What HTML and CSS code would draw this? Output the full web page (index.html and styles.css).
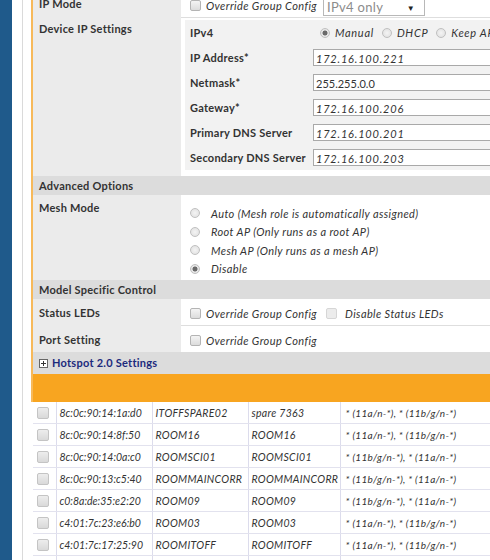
FILE: index.html
```html
<!DOCTYPE html>
<html>
<head>
<meta charset="utf-8">
<link rel="stylesheet" href="styles.css">
</head>
<body>
<div class="page">
  <div class="sidebar"></div>
  <div class="gutter"></div>
  <div class="main">
    <div class="panel">
      <div class="row ipmode">
        <div class="label">IP Mode</div>
        <div class="value inline sep">
          <span class="cb"></span><span class="it">Override Group Config</span>
          <span class="select">IPv4 only<span class="arrow">▼</span></span>
        </div>
      </div>
      <div class="row device">
        <div class="label">Device IP Settings</div>
        <div class="value wrap">
          <div class="nested">
            <div class="nrow"><div class="nlabel">IPv4</div><div class="ncell radios"><span class="rd on"></span><span class="it">Manual</span><span class="rd"></span><span class="it">DHCP</span><span class="rd"></span><span class="it">Keep AP's Setting</span></div></div>
            <div class="nrow"><div class="nlabel">IP Address*</div><div class="ncell"><span class="inp it">172.16.100.221</span></div></div>
            <div class="nrow"><div class="nlabel">Netmask*</div><div class="ncell"><span class="inp">255.255.0.0</span></div></div>
            <div class="nrow"><div class="nlabel">Gateway*</div><div class="ncell"><span class="inp it">172.16.100.206</span></div></div>
            <div class="nrow"><div class="nlabel">Primary DNS Server</div><div class="ncell"><span class="inp it">172.16.100.201</span></div></div>
            <div class="nrow"><div class="nlabel">Secondary DNS Server</div><div class="ncell"><span class="inp it">172.16.100.203</span></div></div>
          </div>
        </div>
      </div>
      <div class="section">Advanced Options</div>
      <div class="row mesh">
        <div class="label">Mesh Mode</div>
        <div class="value list">
          <div class="opt"><span class="rd"></span><span class="it">Auto (Mesh role is automatically assigned)</span></div>
          <div class="opt"><span class="rd"></span><span class="it">Root AP (Only runs as a root AP)</span></div>
          <div class="opt"><span class="rd"></span><span class="it">Mesh AP (Only runs as a mesh AP)</span></div>
          <div class="opt"><span class="rd on"></span><span class="it">Disable</span></div>
        </div>
      </div>
      <div class="section">Model Specific Control</div>
      <div class="row leds">
        <div class="label">Status LEDs</div>
        <div class="value inline sep">
          <span class="cb"></span><span class="it">Override Group Config</span>
          <span class="cb dis"></span><span class="it">Disable Status LEDs</span>
        </div>
      </div>
      <div class="row port">
        <div class="label">Port Setting</div>
        <div class="value inline">
          <span class="cb"></span><span class="it">Override Group Config</span>
        </div>
      </div>
      <div class="section hotspot"><span class="plus"></span>Hotspot 2.0 Settings</div>
      <div class="band"></div>
    </div>
    <table class="aps">
      <colgroup><col class="c1"><col class="c2"><col class="c3"><col class="c4"><col class="c5"></colgroup>
      <tr><td><span class="cb g"></span></td><td>8c:0c:90:14:1a:d0</td><td>ITOFFSPARE02</td><td>spare 7363</td><td>* (11a/n-*), * (11b/g/n-*)</td></tr>
      <tr><td><span class="cb g"></span></td><td>8c:0c:90:14:8f:50</td><td>ROOM16</td><td>ROOM16</td><td>* (11a/n-*), * (11b/g/n-*)</td></tr>
      <tr><td><span class="cb g"></span></td><td>8c:0c:90:14:0a:c0</td><td>ROOMSCI01</td><td>ROOMSCI01</td><td>* (11b/g/n-*), * (11a/n-*)</td></tr>
      <tr><td><span class="cb g"></span></td><td>8c:0c:90:13:c5:40</td><td>ROOMMAINCORR</td><td>ROOMMAINCORR</td><td>* (11b/g/n-*), * (11a/n-*)</td></tr>
      <tr><td><span class="cb g"></span></td><td>c0:8a:de:35:e2:20</td><td>ROOM09</td><td>ROOM09</td><td>* (11b/g/n-*), * (11a/n-*)</td></tr>
      <tr><td><span class="cb g"></span></td><td>c4:01:7c:23:e6:b0</td><td>ROOM03</td><td>ROOM03</td><td>* (11a/n-*), * (11b/g/n-*)</td></tr>
      <tr><td><span class="cb g"></span></td><td>c4:01:7c:17:25:90</td><td>ROOMITOFF</td><td>ROOMITOFF</td><td>* (11a/n-*), * (11b/g/n-*)</td></tr>
      <tr><td><span class="cb g"></span></td><td>c4:01:7c:17:25:a0</td><td>ROOM12</td><td>ROOM12</td><td>* (11a/n-*), * (11b/g/n-*)</td></tr>
    </table>
  </div>
</div>
</body>
</html>
```
FILE: styles.css
```css
html, body { margin: 0; padding: 0; background: #fff; }
body { font-family: Lato, "Liberation Sans", sans-serif; font-size: 11px; color: #333; }
.page { display: flex; width: 490px; height: 560px; overflow: hidden; }
.sidebar { width: 12px; flex: none; background: #1f5a8b; }
.gutter { width: 10px; flex: none; background: #fff; }
.main { flex: none; width: 520px; border-left: 1px solid #dadada; padding-left: 8px; }
.panel { border-left: 2px solid #f7b95a; background: #ebebeb; margin-top: -6px; }
.row { display: flex; }
.label { width: 142px; flex: none; padding: 0 0 0 6px; font-weight: bold; letter-spacing: 0.25px; }
.value { flex: 1; background: #fff; }
.value.sep { border-bottom: 1px solid #dedede; }
.inline { display: flex; align-items: center; padding-left: 9px; }
.it { font-style: italic; letter-spacing: 0.4px; }
.cb { display: inline-block; width: 9px; height: 9px; border: 1px solid #b4b4b4; border-radius: 2px; background: linear-gradient(#f4f4f4, #dcdcdc); margin-right: 5px; flex: none; }
.cb.dis { border-color: #d6d6d6; background: #ececec; margin-left: 9px; margin-right: 8px; }
.rd { display: inline-block; width: 10px; height: 10px; border: 1px solid #c0c0c0; border-radius: 50%; background: radial-gradient(#f4f4f4, #dedede); flex: none; box-sizing: border-box; }
.rd.on { background: radial-gradient(circle, #6a6a6a 0 2.2px, #e6e6e6 2.8px); }
.ipmode { height: 24px; }
.ipmode .label { padding-top: 3px; }
.select { display: inline-flex; align-items: center; margin-left: 6px; width: 102px; height: 18px; margin-top: 2px; border: 1px solid #b8b8b8; box-sizing: border-box; padding-left: 3px; font-size: 13px; letter-spacing: 0.3px; color: #8c8c8c; background: #fff; position: relative; }
.arrow { position: absolute; right: 9px; top: 4px; font-size: 8px; color: #222; }
.device .label { padding-top: 4px; }
.wrap { padding: 2px 0 6px 4px; }
.nested { background: #f2f2f2; }
.nrow { display: flex; height: 25px; align-items: center; }
.nlabel { width: 120px; padding-left: 5px; flex: none; font-weight: bold; letter-spacing: 0.25px; }
.ncell { flex: 1; padding-left: 3px; }
.radios { display: flex; align-items: center; padding-left: 10px; }
.radios .rd { margin-right: 5px; }
.radios .it { margin-right: 8px; letter-spacing: 0.7px; }
.inp { display: block; width: 200px; height: 17px; line-height: 17px; border: 1px solid #a9a9a9; background: #fff; padding-left: 2px; box-sizing: border-box; color: #333; }
.inp.it { letter-spacing: 0.8px; }
.section { height: 19px; line-height: 19px; background: #dcdcdc; padding-left: 6px; font-weight: bold; letter-spacing: 0.25px; }
.mesh { height: 85px; }
.mesh .label { padding-top: 6px; }
.list { padding: 9px 0 0 9px; }
.opt { display: flex; align-items: center; height: 18.5px; }
.opt .rd { margin-right: 11px; }
.leds { height: 27px; }
.leds .label, .port .label { display: flex; align-items: center; }
.leds .value { padding-top: 3px; }
.port { height: 26px; }
.port .value { padding-top: 3px; }
.hotspot { height: 22px; line-height: 22px; color: #1b2a7c; display: flex; align-items: center; }
.plus { width: 9px; height: 9px; border: 1px solid #666; box-sizing: border-box; margin-right: 4px; background: linear-gradient(#333, #333) center / 5px 1px no-repeat, linear-gradient(#333, #333) center / 1px 5px no-repeat, #fff; }
.band { height: 28px; background: #f8a520; }
.aps { border-collapse: collapse; margin-left: 2px; width: 520px; table-layout: fixed; font-style: italic; font-size: 10.5px; letter-spacing: 0.3px; }
.aps td { border-bottom: 1px solid #e2e2ee; border-left: 1px solid #dcdcec; height: 21px; padding: 0 0 0 3px; white-space: nowrap; overflow: hidden; }
.aps td:first-child { border-left: none; padding-left: 4px; }
.aps td:nth-child(2) { letter-spacing: 0; }
.c1 { width: 23px; } .c2 { width: 96px; } .c3 { width: 96px; } .c4 { width: 92px; }
.cb.g { width: 10px; height: 10px; border-color: #c4c4c4; background: linear-gradient(#ededed, #d9d9d9); vertical-align: middle; }
.aps td:last-child { padding-left: 5px; font-size: 10px; letter-spacing: 0.3px; }
```
